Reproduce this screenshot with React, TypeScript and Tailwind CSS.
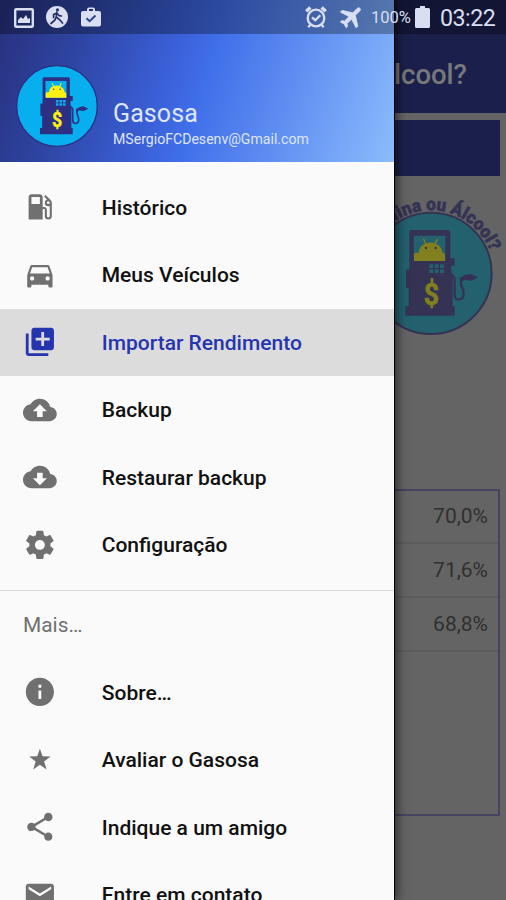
import type { ReactNode } from 'react';
import {
  MdLocalGasStation, MdDirectionsCar, MdLibraryAdd, MdCloudUpload, MdCloudDownload,
  MdInfo, MdShare, MdMail,
} from 'react-icons/md';

type PumpColors = { disc: string; ink: string; accent: string };

function PumpArt({ disc, ink, accent }: PumpColors) {
  return (
    <g>
      <circle cx="165" cy="277" r="182" fill={disc} stroke={ink} strokeWidth="6" />
      <path fill={ink} d="M106 147H216Q223 147 223 154V232H236V254H226V276H230V376H236V404H88V376H98V321H90V266H100V154Q100 147 106 147Z" />
      <path fill={disc} d="M113 164H208V240H113Z" />
      <path fill={accent} d="M114 240V220Q114 215 121 215H129C129 199 139 191 147 189L141 174L144 172L151 187Q163 182 175 187L183 172L186 174L180 189C190 193 199 203 199 215Q207 215 207 221V240Z" />
      <circle cx="150" cy="201" r="3.5" fill={ink} />
      <circle cx="179" cy="201" r="3.5" fill={ink} />
      <path fill={disc} d="M160 250h12v11h-12zM176 250h12v11h-12zM192 250h12v11h-12zM160 265h12v11h-12zM176 265h12v11h-12zM192 265h12v11h-12z" />
      <path fill="none" stroke={ink} strokeWidth="7" d="M228 284Q236 284 236 299V340Q236 356 248 356Q263 354 263 339Q263 330 257 316Q250 297 262 293" />
      <path fill={ink} d="M250 292L268 281L284 278L306 289L286 299L266 297L254 303Z" />
      <text x="166" y="372" textAnchor="middle" fontSize="94" fontWeight="700" fill={accent} stroke={accent} strokeWidth="2" fontFamily="Roboto, sans-serif" textLength="46" lengthAdjust="spacingAndGlyphs">$</text>
    </g>
  );
}

const GearIcon = () => (
  <svg viewBox="0 0 24 24" className="size-full" fill="currentColor">
    <path d="M19.43 12.98c.04-.32.07-.64.07-.98s-.03-.66-.07-.98l2.11-1.65c.19-.15.24-.42.12-.64l-2-3.46c-.12-.22-.39-.3-.61-.22l-2.49 1c-.52-.4-1.08-.73-1.69-.98l-.38-2.65C14.46 2.18 14.25 2 14 2h-4c-.25 0-.46.18-.49.42l-.38 2.65c-.61.25-1.17.59-1.69.98l-2.49-1c-.23-.09-.49 0-.61.22l-2 3.46c-.13.22-.07.49.12.64l2.11 1.65c-.04.32-.07.65-.07.98s.03.66.07.98l-2.11 1.65c-.19.15-.24.42-.12.64l2 3.46c.12.22.39.3.61.22l2.49-1c.52.4 1.08.73 1.69.98l.38 2.65c.03.24.24.42.49.42h4c.25 0 .46-.18.49-.42l.38-2.65c.61-.25 1.17-.59 1.69-.98l2.49 1c.23.09.49 0 .61-.22l2-3.46c.12-.22.07-.49-.12-.64l-2.11-1.65zM12 15.5c-1.93 0-3.5-1.57-3.5-3.5s1.57-3.5 3.5-3.5 3.5 1.57 3.5 3.5-1.57 3.5-3.5 3.5z" />
  </svg>
);

const StarIcon = () => (
  <svg viewBox="0 0 24 24" className="size-full" fill="currentColor">
    <path d="M12 4L13.9 9.5L19.6 9.6L15 13.1L16.7 18.8L12 15.4L7.3 18.8L9 13.1L4.4 9.6L10.1 9.5Z" />
  </svg>
);

function StatusBar() {
  return (
    <div className="absolute inset-x-0 top-0 flex h-[34px] items-center bg-black/30 pr-[11px] pl-[14px] text-[#d9def0]">
      <svg viewBox="0 0 20 20" className="mt-px size-5 shrink-0">
        <rect x="1.2" y="1.2" width="17.6" height="17.6" rx="1" fill="none" stroke="currentColor" strokeWidth="2.4" />
        <path fill="currentColor" d="M4 15V12L7 9L9 11L12 7L14 11L16 10V15Z" />
      </svg>
      <svg viewBox="0 0 22 22" className="ml-3 size-[22px] shrink-0">
        <circle cx="11" cy="11" r="11" fill="currentColor" />
        <g fill="none" stroke="#252f68" strokeWidth="1.7" strokeLinecap="round">
          <path d="M10.8 6L10.2 11L14 14L16.5 17M10.2 11L8.8 14.2L5 17.5M10.8 7L7.6 8.5V11.5M11 7.2L13.2 9.7L15.5 10" />
        </g>
        <circle cx="11.5" cy="3.8" r="1.6" fill="#252f68" />
      </svg>
      <svg viewBox="0 0 20 20" className="ml-[13px] size-5 shrink-0">
        <path fill="currentColor" fillRule="evenodd" d="M2 4H6V2.5Q6 .5 8 .5H12Q14 .5 14 2.5V4H18Q20 4 20 6V17.5Q20 19.5 18 19.5H2Q0 19.5 0 17.5V6Q0 4 2 4ZM8 4H12V2H8Z" />
        <path fill="none" stroke="#2a438e" strokeWidth="2" d="M5.5 11.3L8.6 14.2L14.5 8.5" />
      </svg>
      <svg viewBox="0 0 24 24" className="ml-[203px] size-[24px] shrink-0" fill="none" stroke="currentColor">
        <circle cx="12" cy="13" r="8.3" strokeWidth="2.3" />
        <path strokeWidth="3.4" d="M2.2 6.2L6.4 2.4M21.8 6.2L17.6 2.4" />
        <path strokeWidth="2.3" d="M8 12.3L11.3 15.2L16.3 10.3M6.5 19.5L4.3 22.2M17.5 19.5L19.7 22.2" />
      </svg>
      <svg viewBox="0 0 24 24" className="ml-[10px] size-[28px] shrink-0 rotate-45" fill="currentColor" stroke="currentColor" strokeWidth="0.8">
        <path d="M21 16v-2l-8-5V3.5c0-.83-.67-1.5-1.5-1.5S10 2.67 10 3.5V9l-8 5v2l8-2.5V19l-2 1.5V22l3.5-1 3.5 1v-1.5L13 19v-5.5l8 2.5z" />
      </svg>
      <span className="mt-[3px] ml-[5px] w-[40px] text-[16.5px] leading-none whitespace-nowrap">100%</span>
      <svg viewBox="0 0 15 22" className="ml-[4px] h-[22px] w-[15px] shrink-0" fill="currentColor">
        <path d="M5 0H10V2H13.5Q15 2 15 3.5V20.5Q15 22 13.5 22H1.5Q0 22 0 20.5V3.5Q0 2 1.5 2H5Z" />
      </svg>
      <span className="mt-[4px] ml-auto w-[55px] text-[23.2px] leading-none tracking-[-0.5px] whitespace-nowrap">03:22</span>
    </div>
  );
}

function MenuItem({ icon, label, active = false }: { icon: ReactNode; label: string; active?: boolean }) {
  return (
    <li className={active ? 'flex h-[67.5px] shrink-0 items-center bg-[#dcdcdc] pl-[23px] text-[#2535ae]' : 'flex h-[67.5px] shrink-0 items-center pl-[23px] text-[#111]'}>
      <span className={active ? 'size-[33.75px] shrink-0' : 'size-[33.75px] shrink-0 text-[#707070]'}>{icon}</span>
      <span className="ml-[45px] pt-[2px] text-[21px] font-medium whitespace-nowrap">{label}</span>
    </li>
  );
}

function Background() {
  return (
    <div className="flex h-full flex-col bg-[#646464]">
      <header className="flex h-[113px] shrink-0 items-center justify-end bg-[#1a204b] pt-[37px] pr-[39px] text-[27.5px] font-medium text-[#77787a]">
        Gasolina ou Álcool?
      </header>
      <div className="mt-[7px] mr-[6px] ml-[6px] h-[56px] shrink-0 bg-[#1a204b]" />
      <div className="mt-[10px] flex h-[156px] shrink-0 justify-end">
        <svg viewBox="-84 15 474 468" className="h-[156px] w-[158px]">
          <PumpArt disc="#23616f" ink="#353354" accent="#817f1e" />
          <path id="badge-arc" d="M-24 277A189 189 0 0 1 354 277" fill="none" />
          <text fontSize="54" fontWeight="900" fill="#353354" stroke="#353354" strokeWidth="1.5" fontFamily="Roboto, sans-serif" textLength="460" lengthAdjust="spacingAndGlyphs">
            <textPath href="#badge-arc" startOffset="67" textLength="460" lengthAdjust="spacingAndGlyphs">Gasolina ou Álcool?</textPath>
          </text>
        </svg>
      </div>
      <section className="mt-[147px] mr-[6px] ml-[6px] h-[327px] shrink-0 border-2 border-[#444460] text-[21px] text-[#303030]">
        {['70,0%', '71,6%', '68,8%'].map((value) => (
          <div key={value} className="flex h-[54px] items-center justify-end border-b-2 border-[#5b5b5b] pr-[10px] pt-px first:h-[53px]">
            {value}
          </div>
        ))}
      </section>
    </div>
  );
}

function Drawer() {
  return (
    <aside className="absolute inset-y-0 left-0 flex w-[395px] flex-col border-r border-black bg-[#fafafa] shadow-[1px_0_10px_1px_rgba(0,0,0,0.6)]">
      <div className="flex h-[162px] shrink-0 bg-[linear-gradient(108deg,#28307c_0%,#2e44a2_20%,#3a5fd6_42%,#406fea_52%,#5c8bf1_70%,#8bbcfc_100%)] pt-[65px] pl-[16px] text-[#dfe6fb]">
        <svg viewBox="-20 92 370 370" className="size-[82px] shrink-0">
          <PumpArt disc="#07afef" ink="#2d2f83" accent="#fff213" />
        </svg>
        <div className="ml-[15px] pt-[34px]">
          <div className="text-[25px] leading-[30px] tracking-[0.1px]">Gasosa</div>
          <div className="mt-px text-[14.1px] leading-[18px] whitespace-nowrap">MSergioFCDesenv@Gmail.com</div>
        </div>
      </div>
      <ul className="mt-[11.5px] flex shrink-0 flex-col">
        <MenuItem icon={<MdLocalGasStation className="size-full" />} label="Histórico" />
        <MenuItem icon={<MdDirectionsCar className="size-full" />} label="Meus Veículos" />
        <MenuItem active icon={<MdLibraryAdd className="size-full" />} label="Importar Rendimento" />
        <MenuItem icon={<MdCloudUpload className="size-full" />} label="Backup" />
        <MenuItem icon={<MdCloudDownload className="size-full" />} label="Restaurar backup" />
        <MenuItem icon={<GearIcon />} label="Configuração" />
      </ul>
      <div className="mt-[11px] flex h-[69px] shrink-0 items-center border-t border-[#d8d8d8] pt-[3px] pl-[23px] text-[20.9px] text-[#707070]">
        Mais…
      </div>
      <ul className="flex shrink-0 flex-col">
        <MenuItem icon={<MdInfo className="size-full" />} label="Sobre…" />
        <MenuItem icon={<StarIcon />} label="Avaliar o Gasosa" />
        <MenuItem icon={<MdShare className="size-full" />} label="Indique a um amigo" />
        <MenuItem icon={<MdMail className="size-full" />} label="Entre em contato" />
      </ul>
    </aside>
  );
}

export default function App() {
  return (
    <main className="relative h-[900px] w-[506px] overflow-hidden font-[Roboto,sans-serif]">
      <Background />
      <Drawer />
      <StatusBar />
    </main>
  );
}
